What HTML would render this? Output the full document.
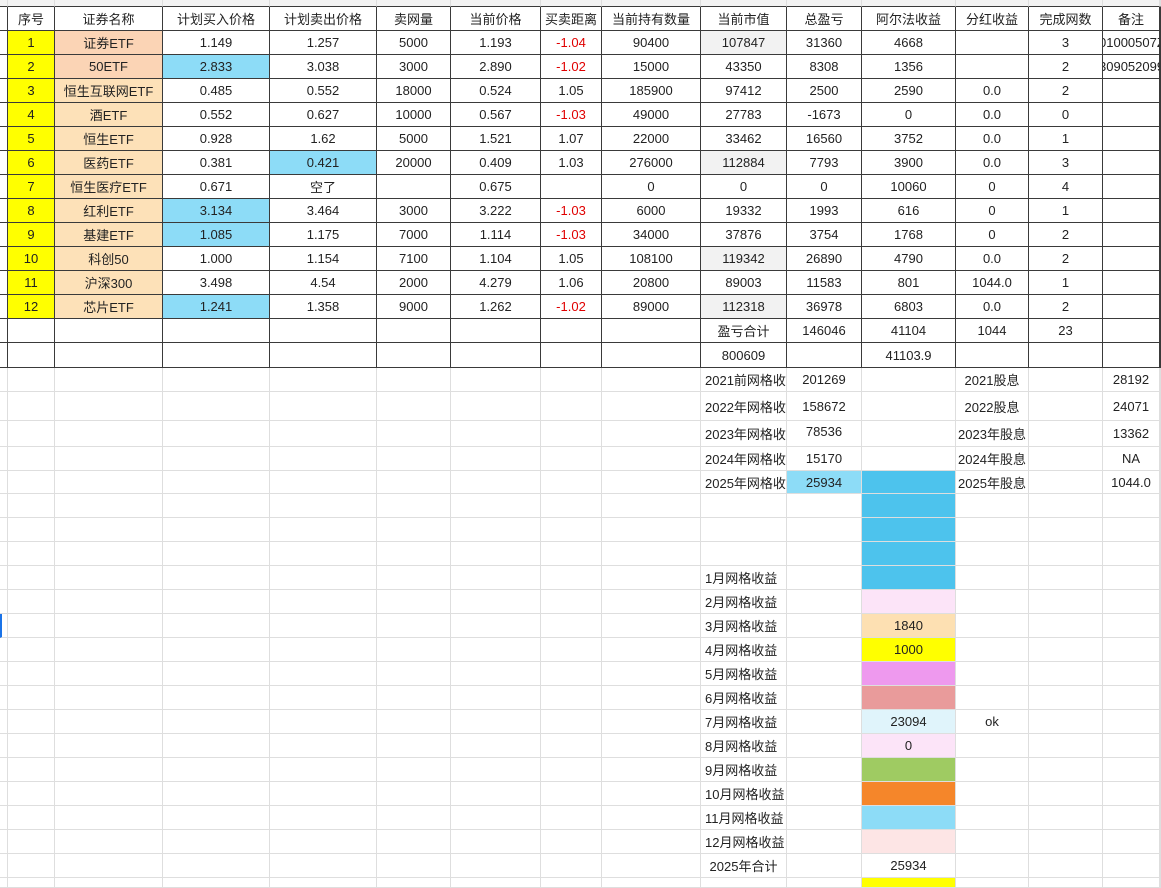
<!DOCTYPE html>
<html><head><meta charset="utf-8"><style>
html,body{margin:0;padding:0;background:#fff;width:1161px;height:882px;overflow:hidden}
table{border-collapse:separate;border-spacing:0;table-layout:fixed;position:absolute;left:0;top:0;width:1161px}
td{border-right:1px solid #dedede;border-bottom:1px solid #dedede;padding:0;text-align:center;white-space:nowrap;overflow:hidden;font:13px "Liberation Sans","Noto Sans CJK SC",sans-serif;color:#222;box-sizing:border-box}
tr.k td{border-right-color:#3a3a3a;border-bottom-color:#3a3a3a}
tr.g td{background:#f3f3f3;border-bottom-color:#3a3a3a}
.y{background:#ffff00}.p{background:#fbd4b5}.q{background:#fde1b8}.b{background:#8ddcf7}.gr{background:#f2f2f2}.r{color:#e00000}
.l{text-align:left;padding-left:4px}
.c1{background:#4dc3ed}
</style></head><body>
<table>
<colgroup><col style="width:8px"><col style="width:47px"><col style="width:108px"><col style="width:107px"><col style="width:107px"><col style="width:74px"><col style="width:90px"><col style="width:61px"><col style="width:99px"><col style="width:86px"><col style="width:75px"><col style="width:94px"><col style="width:73px"><col style="width:74px"><col style="width:57px"><col style="width:1px"></colgroup>
<tr class="g" style="height:7px"><td></td><td></td><td></td><td></td><td></td><td></td><td></td><td></td><td></td><td></td><td></td><td></td><td></td><td></td><td></td><td></td></tr>
<tr class="k" style="height:24px"><td></td><td>序号</td><td>证券名称</td><td>计划买入价格</td><td>计划卖出价格</td><td>卖网量</td><td>当前价格</td><td>买卖距离</td><td>当前持有数量</td><td>当前市值</td><td>总盈亏</td><td>阿尔法收益</td><td>分红收益</td><td>完成网数</td><td>备注</td><td></td></tr>
<tr class="k" style="height:24px"><td></td><td class="y">1</td><td class="p">证券ETF</td><td>1.149</td><td>1.257</td><td>5000</td><td>1.193</td><td class="r">-1.04</td><td>90400</td><td class="gr">107847</td><td>31360</td><td>4668</td><td></td><td>3</td><td style="text-align:left"><span style="margin-left:-4px">01000507Z</span></td><td></td></tr>
<tr class="k" style="height:24px"><td></td><td class="y">2</td><td class="p">50ETF</td><td class="b">2.833</td><td>3.038</td><td>3000</td><td>2.890</td><td class="r">-1.02</td><td>15000</td><td>43350</td><td>8308</td><td>1356</td><td></td><td>2</td><td style="text-align:left"><span style="margin-left:-4px">309052099</span></td><td></td></tr>
<tr class="k" style="height:24px"><td></td><td class="y">3</td><td class="q">恒生互联网ETF</td><td>0.485</td><td>0.552</td><td>18000</td><td>0.524</td><td>1.05</td><td>185900</td><td>97412</td><td>2500</td><td>2590</td><td>0.0</td><td>2</td><td></td><td></td></tr>
<tr class="k" style="height:24px"><td></td><td class="y">4</td><td class="q">酒ETF</td><td>0.552</td><td>0.627</td><td>10000</td><td>0.567</td><td class="r">-1.03</td><td>49000</td><td>27783</td><td>-1673</td><td>0</td><td>0.0</td><td>0</td><td></td><td></td></tr>
<tr class="k" style="height:24px"><td></td><td class="y">5</td><td class="q">恒生ETF</td><td>0.928</td><td>1.62</td><td>5000</td><td>1.521</td><td>1.07</td><td>22000</td><td>33462</td><td>16560</td><td>3752</td><td>0.0</td><td>1</td><td></td><td></td></tr>
<tr class="k" style="height:24px"><td></td><td class="y">6</td><td class="q">医药ETF</td><td>0.381</td><td class="b">0.421</td><td>20000</td><td>0.409</td><td>1.03</td><td>276000</td><td class="gr">112884</td><td>7793</td><td>3900</td><td>0.0</td><td>3</td><td></td><td></td></tr>
<tr class="k" style="height:24px"><td></td><td class="y">7</td><td class="q">恒生医疗ETF</td><td>0.671</td><td>空了</td><td></td><td>0.675</td><td></td><td>0</td><td>0</td><td>0</td><td>10060</td><td>0</td><td>4</td><td></td><td></td></tr>
<tr class="k" style="height:24px"><td></td><td class="y">8</td><td class="q">红利ETF</td><td class="b">3.134</td><td>3.464</td><td>3000</td><td>3.222</td><td class="r">-1.03</td><td>6000</td><td>19332</td><td>1993</td><td>616</td><td>0</td><td>1</td><td></td><td></td></tr>
<tr class="k" style="height:24px"><td></td><td class="y">9</td><td class="q">基建ETF</td><td class="b">1.085</td><td>1.175</td><td>7000</td><td>1.114</td><td class="r">-1.03</td><td>34000</td><td>37876</td><td>3754</td><td>1768</td><td>0</td><td>2</td><td></td><td></td></tr>
<tr class="k" style="height:24px"><td></td><td class="y">10</td><td class="q">科创50</td><td>1.000</td><td>1.154</td><td>7100</td><td>1.104</td><td>1.05</td><td>108100</td><td class="gr">119342</td><td>26890</td><td>4790</td><td>0.0</td><td>2</td><td></td><td></td></tr>
<tr class="k" style="height:24px"><td></td><td class="y">11</td><td class="q">沪深300</td><td>3.498</td><td>4.54</td><td>2000</td><td>4.279</td><td>1.06</td><td>20800</td><td>89003</td><td>11583</td><td>801</td><td>1044.0</td><td>1</td><td></td><td></td></tr>
<tr class="k" style="height:24px"><td></td><td class="y">12</td><td class="q">芯片ETF</td><td class="b">1.241</td><td>1.358</td><td>9000</td><td>1.262</td><td class="r">-1.02</td><td>89000</td><td class="gr">112318</td><td>36978</td><td>6803</td><td>0.0</td><td>2</td><td></td><td></td></tr>
<tr class="k" style="height:24px"><td></td><td></td><td></td><td></td><td></td><td></td><td></td><td></td><td></td><td>盈亏合计</td><td>146046</td><td>41104</td><td>1044</td><td>23</td><td></td><td></td></tr>
<tr class="k" style="height:25px"><td></td><td></td><td></td><td></td><td></td><td></td><td></td><td></td><td></td><td>800609</td><td></td><td>41103.9</td><td></td><td></td><td></td><td></td></tr>
<tr style="height:24px"><td></td><td></td><td></td><td></td><td></td><td></td><td></td><td></td><td></td><td class="l">2021前网格收</td><td>201269</td><td></td><td>2021股息</td><td></td><td>28192</td><td></td></tr>
<tr style="height:29px"><td></td><td></td><td></td><td></td><td></td><td></td><td></td><td></td><td></td><td class="l">2022年网格收</td><td>158672</td><td></td><td>2022股息</td><td></td><td>24071</td><td></td></tr>
<tr style="height:26px"><td></td><td></td><td></td><td></td><td></td><td></td><td></td><td></td><td></td><td class="l">2023年网格收</td><td style="vertical-align:top;padding-top:3px">78536</td><td></td><td style="overflow:visible">2023年股息</td><td></td><td>13362</td><td></td></tr>
<tr style="height:24px"><td></td><td></td><td></td><td></td><td></td><td></td><td></td><td></td><td></td><td class="l">2024年网格收</td><td>15170</td><td></td><td style="overflow:visible">2024年股息</td><td></td><td>NA</td><td></td></tr>
<tr style="height:23px"><td></td><td></td><td></td><td></td><td></td><td></td><td></td><td></td><td></td><td class="l">2025年网格收</td><td class="b">25934</td><td class="c1"></td><td style="overflow:visible">2025年股息</td><td></td><td>1044.0</td><td></td></tr>
<tr style="height:24px"><td></td><td></td><td></td><td></td><td></td><td></td><td></td><td></td><td></td><td></td><td></td><td class="c1"></td><td></td><td></td><td></td><td></td></tr>
<tr style="height:24px"><td></td><td></td><td></td><td></td><td></td><td></td><td></td><td></td><td></td><td></td><td></td><td class="c1"></td><td></td><td></td><td></td><td></td></tr>
<tr style="height:24px"><td></td><td></td><td></td><td></td><td></td><td></td><td></td><td></td><td></td><td></td><td></td><td class="c1"></td><td></td><td></td><td></td><td></td></tr>
<tr style="height:24px"><td></td><td></td><td></td><td></td><td></td><td></td><td></td><td></td><td></td><td class="l">1月网格收益</td><td></td><td class="c1"></td><td></td><td></td><td></td><td></td></tr>
<tr style="height:24px"><td></td><td></td><td></td><td></td><td></td><td></td><td></td><td></td><td></td><td class="l">2月网格收益</td><td></td><td style="background:#fce4f8"></td><td></td><td></td><td></td><td></td></tr>
<tr style="height:24px"><td style="border-left:2px solid #1a73e8"></td><td></td><td></td><td></td><td></td><td></td><td></td><td></td><td></td><td class="l">3月网格收益</td><td></td><td style="background:#fde0b2">1840</td><td></td><td></td><td></td><td></td></tr>
<tr style="height:24px"><td></td><td></td><td></td><td></td><td></td><td></td><td></td><td></td><td></td><td class="l">4月网格收益</td><td></td><td class="y">1000</td><td></td><td></td><td></td><td></td></tr>
<tr style="height:24px"><td></td><td></td><td></td><td></td><td></td><td></td><td></td><td></td><td></td><td class="l">5月网格收益</td><td></td><td style="background:#ee99ee"></td><td></td><td></td><td></td><td></td></tr>
<tr style="height:24px"><td></td><td></td><td></td><td></td><td></td><td></td><td></td><td></td><td></td><td class="l">6月网格收益</td><td></td><td style="background:#e99b9b"></td><td></td><td></td><td></td><td></td></tr>
<tr style="height:24px"><td></td><td></td><td></td><td></td><td></td><td></td><td></td><td></td><td></td><td class="l">7月网格收益</td><td></td><td style="background:#e0f4fb">23094</td><td>ok</td><td></td><td></td><td></td></tr>
<tr style="height:24px"><td></td><td></td><td></td><td></td><td></td><td></td><td></td><td></td><td></td><td class="l">8月网格收益</td><td></td><td style="background:#fce4f8">0</td><td></td><td></td><td></td><td></td></tr>
<tr style="height:24px"><td></td><td></td><td></td><td></td><td></td><td></td><td></td><td></td><td></td><td class="l">9月网格收益</td><td></td><td style="background:#9fcb62"></td><td></td><td></td><td></td><td></td></tr>
<tr style="height:24px"><td></td><td></td><td></td><td></td><td></td><td></td><td></td><td></td><td></td><td class="l">10月网格收益</td><td></td><td style="background:#f5862a"></td><td></td><td></td><td></td><td></td></tr>
<tr style="height:24px"><td></td><td></td><td></td><td></td><td></td><td></td><td></td><td></td><td></td><td class="l">11月网格收益</td><td></td><td style="background:#8ddcf7"></td><td></td><td></td><td></td><td></td></tr>
<tr style="height:24px"><td></td><td></td><td></td><td></td><td></td><td></td><td></td><td></td><td></td><td class="l">12月网格收益</td><td></td><td style="background:#fde5e5"></td><td></td><td></td><td></td><td></td></tr>
<tr style="height:24px"><td></td><td></td><td></td><td></td><td></td><td></td><td></td><td></td><td></td><td>2025年合计</td><td></td><td>25934</td><td></td><td></td><td></td><td></td></tr>
<tr style="height:10px"><td></td><td></td><td></td><td></td><td></td><td></td><td></td><td></td><td></td><td></td><td></td><td class="y"></td><td></td><td></td><td></td><td></td></tr>
</table>
</body></html>
